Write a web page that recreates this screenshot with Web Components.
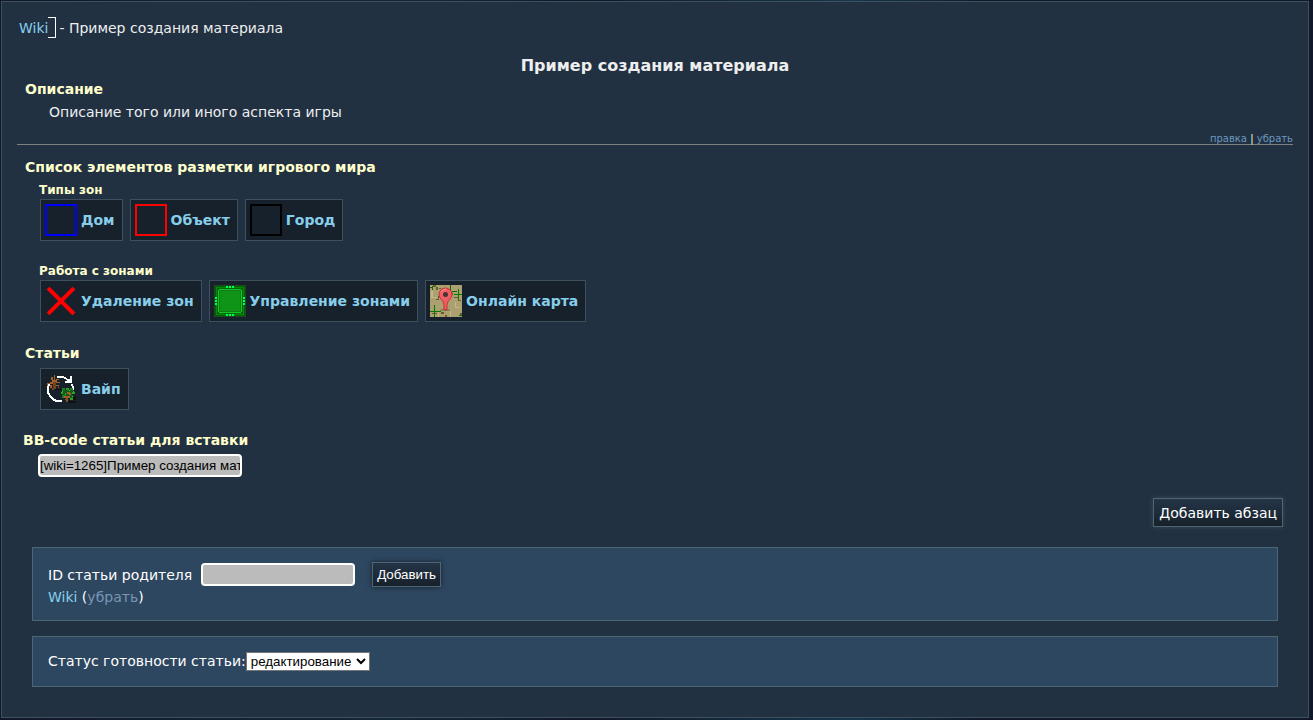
<!DOCTYPE html>
<html lang="ru">
<head>
<meta charset="utf-8">
<title>Wiki - Пример создания материала</title>
<style>
  body {
    margin: 1px 4px 2px 1px;
    background: #11182a linear-gradient(90deg, #11182a, #14263a 30%, #11182a 45%, #15364c 65%, #11182a 75%);
    color: #eee;
    font: 14px/22px Verdana, "DejaVu Sans", sans-serif;
  }
  .bb {
    display: block;
    box-sizing: border-box;
    width: 204px;
    height: 23px;
    margin: 3px 0 0 21px;
    padding: 0;
    border: 2px solid #fff;
    border-radius: 4px;
    background: #bbb;
    color: #000;
    font-family: "Liberation Sans", Arial, sans-serif;
  }
</style>
</head>
<body>
<wiki-page>
  <wiki-crumbs parent="Wiki">- Пример создания материала</wiki-crumbs>
  <wiki-title>Пример создания материала</wiki-title>
  <wiki-section heading="Описание">
    <wiki-text>Описание того или иного аспекта игры</wiki-text>
    <wiki-edit slot="footer"></wiki-edit>
  </wiki-section>
  <wiki-section heading="Список элементов разметки игрового мира" class="list">
    <wiki-tiles heading="Типы зон">
      <wiki-tile icon="house">Дом</wiki-tile>
      <wiki-tile icon="object">Объект</wiki-tile>
      <wiki-tile icon="city">Город</wiki-tile>
    </wiki-tiles>
    <wiki-tiles heading="Работа с зонами">
      <wiki-tile icon="remove">Удаление зон</wiki-tile>
      <wiki-tile icon="manage">Управление зонами</wiki-tile>
      <wiki-tile icon="map">Онлайн карта</wiki-tile>
    </wiki-tiles>
  </wiki-section>
  <wiki-section heading="Статьи" class="articles">
    <wiki-tiles>
      <wiki-tile icon="wipe">Вайп</wiki-tile>
    </wiki-tiles>
  </wiki-section>
  <wiki-section heading="BB-code статьи для вставки" class="code">
    <input class="bb" type="text" aria-label="BB-code статьи для вставки" value="[wiki=1265]Пример создания материала[/wiki]" readonly>
  </wiki-section>
  <wiki-add></wiki-add>
  <wiki-parent></wiki-parent>
  <wiki-status></wiki-status>
</wiki-page>

<script>
const BUTTON_CSS = `
  button {
    box-sizing: border-box;
    border: 1px solid #4d6673;
    background: linear-gradient(#243547, #17212b);
    color: #fff;
    cursor: pointer;
  }
`;

const PANEL_CSS = `
  :host {
    display: block;
    margin: 0 15px 15px;
    padding: 15px 15px 12px;
    border: 1px solid #4d6673;
    background: #2e4760;
    color: #fff;
  }
`;

// [color, x, y, w, h] lists for the pixel icons
const px = (rows) =>
  rows
    .map(([c, x, y, w = 1, h = 1]) => `<rect x="${x}" y="${y}" width="${w}" height="${h}" fill="${c}"/>`)
    .join("");

const frame = (color) => `<rect x="1" y="1" width="30" height="30" fill="none" stroke="${color}" stroke-width="2"/>`;

const ICONS = {
  house: frame("#00f"),
  object: frame("#f00"),
  city: frame("#000"),
  remove: `<g shape-rendering="auto"><path d="M4.500 4.500 27.500 27.500M27.500 4.500 4.500 27.500" stroke="#f00" stroke-width="4" stroke-linecap="square"/></g>`,
  manage:
    px([
      ["#1d4a22", 0, 0, 32, 32],
      ["#006000", 1, 1, 30, 30],
      ["#008c08", 2, 2, 28, 28],
      ["#006b08", 3, 3, 26, 26],
      ["#18c22c", 4, 4, 24, 24],
      ["#107c18", 5, 5, 22, 22],
      ["#109418", 6, 6, 20, 20],
      ["#0a5a10", 3, 3, 2, 2], ["#0a5a10", 27, 3, 2, 2],
      ["#0a5a10", 3, 27, 2, 2], ["#0a5a10", 27, 27, 2, 2],
    ]) +
    px([12, 15, 18].flatMap((n) => [
      ["#00ff60", n, 1, 2, 2],
      ["#00ff60", n, 29, 2, 2],
      ["#00ff60", 1, n, 2, 2],
      ["#00ff60", 29, n, 2, 2],
    ])),
  map:
    px([
      ["#aca070", 0, 0, 32, 32],
      ["#c4b88a", 1, 6, 2, 7], ["#c4b88a", 3, 12, 4, 1], ["#c4b88a", 8, 27, 1, 5],
      ["#c4b88a", 25, 17, 1, 6], ["#c4b88a", 26, 22, 4, 1], ["#c4b88a", 20, 26, 1, 6],
      ["#6b5c30", 3, 0, 3, 2], ["#6b5c30", 6, 2, 2, 3], ["#6b5c30", 9, 3, 2, 1],
      ["#6b5c30", 21, 8, 2, 2], ["#6b5c30", 24, 12, 4, 1], ["#6b5c30", 28, 15, 3, 1],
      ["#6b5c30", 6, 14, 3, 1], ["#6b5c30", 8, 11, 1, 3], ["#6b5c30", 11, 27, 3, 2],
      ["#6b5c30", 2, 28, 5, 1], ["#6b5c30", 15, 30, 2, 2], ["#6b5c30", 30, 28, 2, 3],
      ["#0b6b0b", 0, 2, 2, 1], ["#0b6b0b", 2, 1, 1, 4], ["#0b6b0b", 20, 0, 1, 5],
      ["#0b6b0b", 22, 6, 5, 1], ["#007a00", 28, 4, 1, 11], ["#007a00", 24, 9, 8, 1],
      ["#007a00", 4, 20, 1, 12], ["#007a00", 0, 26, 11, 1], ["#0b6b0b", 29, 30, 3, 1],
    ]) +
    `<g shape-rendering="auto">
      <ellipse cx="15" cy="25" rx="5" ry="1" fill="#86794e"/>
      <path d="M15.500 3a6.500 6.500 0 0 0-6.500 6.500c0 4 4 5.500 5 9.500v5.500h3V19c1-4 5-5.500 5-9.500A6.500 6.500 0 0 0 15.500 3z" fill="#f06062" stroke="#c72f35"/>
      <path d="M11 7q2-3 5-3" stroke="#ff9a98" fill="none"/>
      <circle cx="15.500" cy="9.500" r="2.500" fill="#4a3338"/>
    </g>`,
  wipe:
    `<path d="M12 4.500A12 12 0 0 1 22 6M27 11A12 12 0 0 1 28 17M4 11A12 12 0 0 0 17 28" fill="none" stroke="#fff" stroke-width="2"/>
    <path d="M27 3v7h-7v-2h2V6h3V3z" fill="#fff"/>` +
    `<g transform="translate(2 1)">` +
    px([
      ["#111", 21, 27, 8, 2], ["#111", 26, 23, 3, 3], ["#111", 8, 15, 6, 1],
      ["#a0602c", 7, 1, 1, 6], ["#a0602c", 4, 3, 2, 3], ["#a0602c", 5, 6, 5, 2],
      ["#a0602c", 0, 9, 6, 1], ["#a0602c", 3, 8, 10, 1], ["#a0602c", 9, 5, 3, 1],
      ["#75401a", 6, 8, 3, 7], ["#a0602c", 9, 11, 3, 1], ["#a0602c", 0, 10, 1, 2],
      ["#a0602c", 3, 11, 2, 3], ["#75401a", 5, 14, 2, 2], ["#75401a", 11, 12, 1, 2],
      ["#20801c", 15, 14, 3, 3], ["#2ca224", 19, 14, 3, 2], ["#20801c", 23, 14, 3, 3],
      ["#2ca224", 14, 18, 4, 2], ["#155a18", 16, 16, 9, 5], ["#2ca224", 25, 18, 3, 2],
      ["#20801c", 15, 21, 3, 3], ["#155a18", 18, 21, 8, 3], ["#2ca224", 23, 24, 3, 2],
      ["#2ca224", 18, 19, 1, 2], ["#42d22e", 26, 17, 1, 1], ["#42d22e", 15, 17, 1, 1],
      ["#42d22e", 22, 16, 1, 1], ["#42d22e", 17, 23, 1, 1], ["#42d22e", 25, 22, 1, 1],
      ["#a0602c", 20, 18, 3, 2], ["#a0602c", 17, 22, 6, 2], ["#8f4e21", 19, 23, 2, 5],
      ["#a0602c", 22, 19, 2, 2], ["#8f4e21", 18, 25, 2, 1],
    ]) +
    `</g>`,
};

function define(name, html) {
  customElements.define(
    name,
    class extends HTMLElement {
      constructor() {
        super();
        this.attachShadow({ mode: "open" }).innerHTML = typeof html === "function" ? html(this) : html;
      }
    }
  );
}

define("wiki-page", `
  <style>
    :host {
      display: block;
      padding: 15px 15px;
      border: 1px solid #3f505d;
      background: #213142;
    }
  </style>
  <slot></slot>
`);

define("wiki-crumbs", (el) => `
  <style>
    :host { display: flex; align-items: center; height: 21px; padding-left: 2px; }
    a { color: #87ceeb; text-decoration: none; }
    i {
      box-sizing: border-box;
      width: 8px;
      height: 21px;
      margin-right: 3px;
      border: 1px solid #fff;
      border-left: 0;
    }
  </style>
  <a href="#">${el.getAttribute("parent")}</a><i></i><slot></slot>
`);

define("wiki-title", `
  <style>
    :host { display: block; margin-top: 17px; }
    h1 { margin: 0; font-size: 16px; line-height: 22px; text-align: center; }
  </style>
  <h1><slot></slot></h1>
`);

define("wiki-section", (el) => `
  <style>
    :host { display: block; margin-top: 1px; }
    :host(.list) { margin-top: 11px; }
    :host(.articles) { margin-top: 20px; }
    :host(.code) { margin-top: 19px; }
    h2 { margin: 0 0 0 8px; color: #ffc; font-size: 14px; line-height: 22px; }
    :host(.list) h2, :host(.articles) h2 { margin-bottom: 4px; }
    :host(.code) h2 { margin-left: 6px; }
  </style>
  <h2>${el.getAttribute("heading")}</h2>
  <slot></slot>
  <slot name="footer"></slot>
`);

define("wiki-text", `
  <style>
    :host { display: block; padding: 1px 32px 0; }
    p { margin: 0; }
  </style>
  <p><slot></slot></p>
`);

define("wiki-edit", `
  <style>
    :host {
      display: block;
      margin-top: 11px;
      border-bottom: 1px solid #808080;
      color: #ffc;
      font-size: 10px;
      line-height: 10px;
      text-align: right;
    }
    a { color: #6d97bd; text-decoration: none; }
  </style>
  <a href="#">правка</a> | <a href="#">убрать</a>
`);

define("wiki-tiles", (el) => `
  <style>
    :host { display: block; margin: 0 0 22px 23px; }
    :host(:last-child) { margin-bottom: 0; }
    h3 { margin: 0 0 0 -1px; color: #ffc; font-size: 12px; line-height: 17px; }
    div { display: flex; flex-wrap: wrap; gap: 7px; }
  </style>
  ${el.hasAttribute("heading") ? `<h3>${el.getAttribute("heading")}</h3>` : ""}
  <div><slot></slot></div>
`);

define("wiki-tile", (el) => `
  <style>
    :host { display: block; }
    a {
      display: flex;
      align-items: center;
      gap: 4px;
      padding: 4px 7px 4px 4px;
      border: 1px solid #3f505d;
      background: #17212b;
      color: #87ceeb;
      font-weight: bold;
      text-decoration: none;
    }
    svg { display: block; width: 32px; height: 32px; }
  </style>
  <a href="#">
    <svg viewBox="0 0 32 32" shape-rendering="crispEdges" aria-hidden="true">${ICONS[el.getAttribute("icon")]}</svg>
    <span><slot></slot></span>
  </a>
`);

define("wiki-add", `
  <style>
    :host { display: flex; justify-content: flex-end; margin: 21px 10px 20px; }
    ${BUTTON_CSS}
    button {
      height: 29px;
      padding: 0 5px;
      font: inherit;
      box-shadow: 0 0 5px #3d4a56;
    }
  </style>
  <button type="button">Добавить абзац</button>
`);

define("wiki-parent", `
  <style>
    ${PANEL_CSS}
    .row { display: flex; align-items: center; height: 23px; }
    input {
      box-sizing: border-box;
      width: 154px;
      height: 23px;
      margin: 0 17px 0 9px;
      border: 2px solid #fff;
      border-radius: 4px;
      background: #bbb;
    }
    ${BUTTON_CSS}
    button {
      height: 25px;
      padding: 0 4px;
      font-family: "Liberation Sans", Arial, sans-serif;
      box-shadow: 0 0 5px #17212b;
    }
    a { color: #87ceeb; text-decoration: none; }
    .drop { color: #7896b4; }
  </style>
  <div class="row">
    <label for="parent">ID статьи родителя</label>
    <input id="parent" type="text">
    <button type="button">Добавить</button>
  </div>
  <div><a href="#">Wiki</a> (<a class="drop" href="#">убрать</a>)</div>
`);

define("wiki-status", `
  <style>
    ${PANEL_CSS}
    :host { display: flex; align-items: center; padding: 13px 15px 14px; }
    select {
      width: 124px;
      height: 19px;
      padding: 0;
      border: 1px solid #767676;
      background: #fff;
      color: #000;
      font-family: "Liberation Sans", Arial, sans-serif;
    }
  </style>
  <label for="status">Статус готовности статьи:</label>
  <select id="status">
    <option>редактирование</option>
  </select>
`);
</script>
</body>
</html>
